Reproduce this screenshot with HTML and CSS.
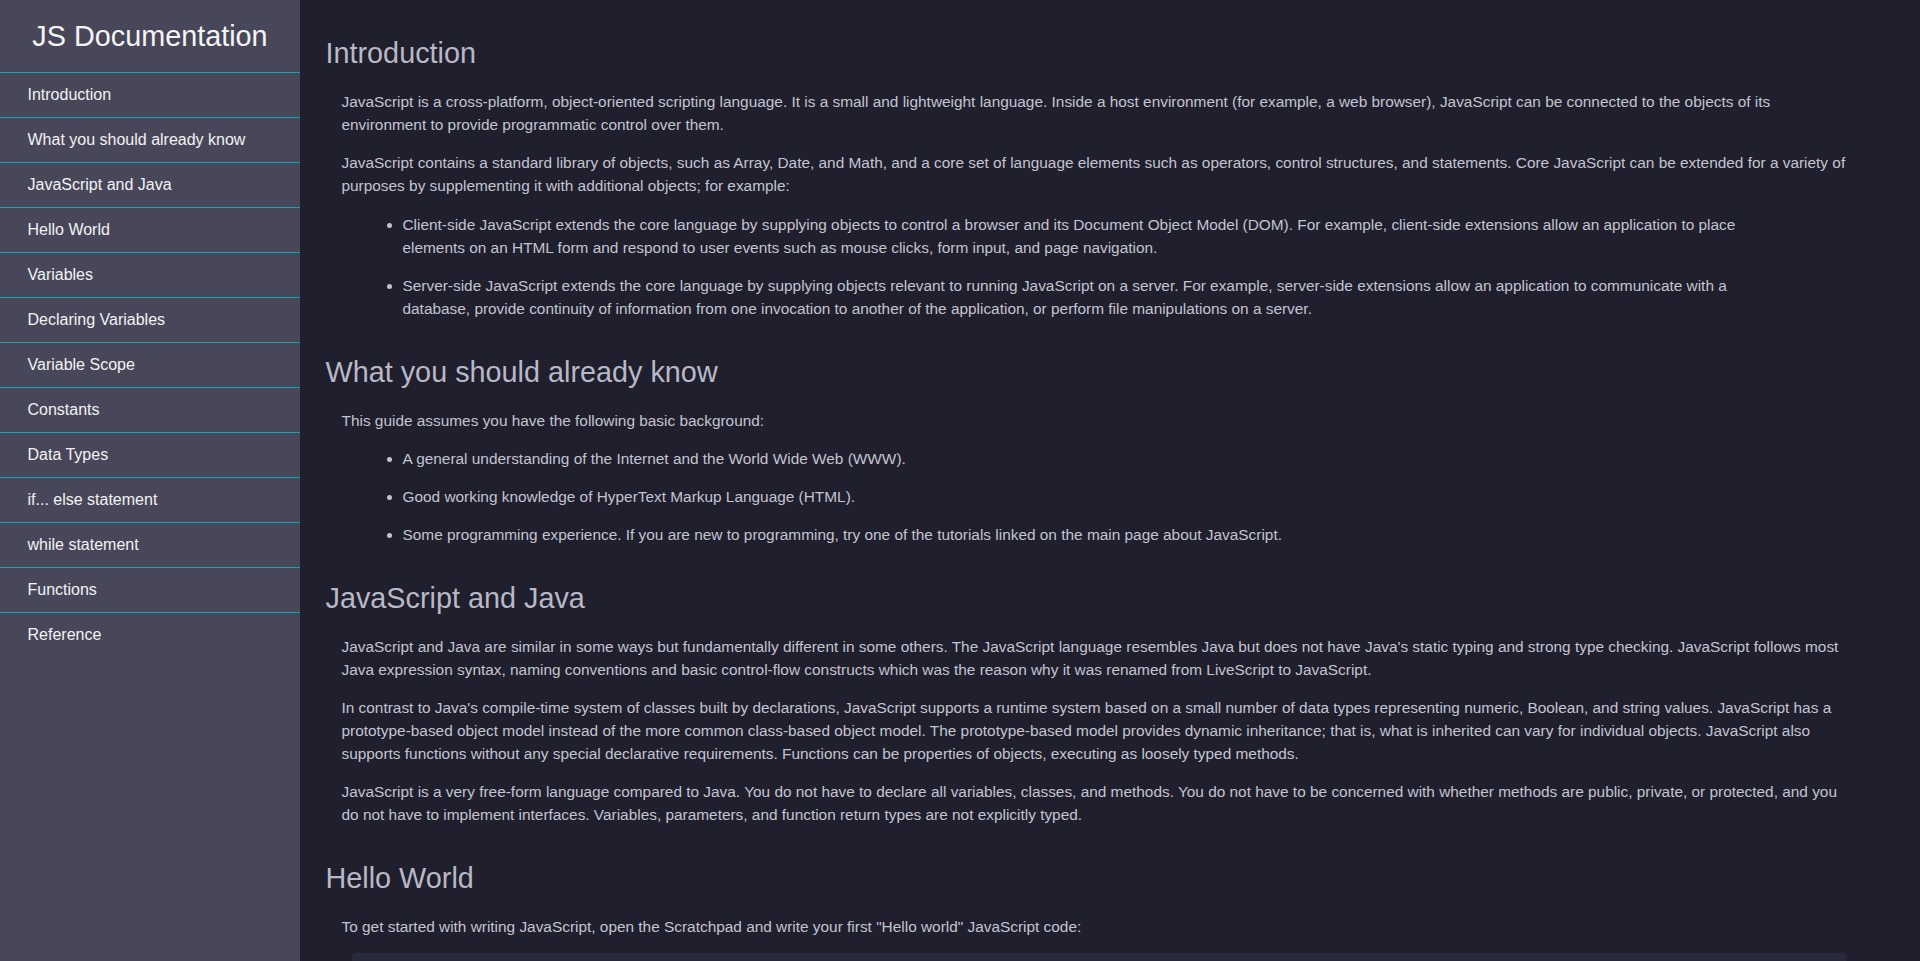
FILE: index.html
```html
<!DOCTYPE html>
<html lang="en">
<head>
<meta charset="utf-8">
<title>JS Documentation</title>
<link rel="stylesheet" href="styles.css">
</head>
<body>
<div class="layout">
  <nav class="navbar" id="navbar">
    <header class="nav-title">JS Documentation</header>
    <a class="nav-link" href="#Introduction">Introduction</a>
    <a class="nav-link" href="#What_you_should_already_know">What you should already know</a>
    <a class="nav-link" href="#JavaScript_and_Java">JavaScript and Java</a>
    <a class="nav-link" href="#Hello_World">Hello World</a>
    <a class="nav-link" href="#Variables">Variables</a>
    <a class="nav-link" href="#Declaring_Variables">Declaring Variables</a>
    <a class="nav-link" href="#Variable_Scope">Variable Scope</a>
    <a class="nav-link" href="#Constants">Constants</a>
    <a class="nav-link" href="#Data_Types">Data Types</a>
    <a class="nav-link" href="#if_else_statement">if... else statement</a>
    <a class="nav-link" href="#while_statement">while statement</a>
    <a class="nav-link" href="#Functions">Functions</a>
    <a class="nav-link" href="#Reference">Reference</a>
  </nav>
  <main class="main-doc" id="main-doc">
    <section class="main-section" id="Introduction">
      <header class="section-title">Introduction</header>
      <p>JavaScript is a cross-platform, object-oriented scripting language. It is a small and lightweight language. Inside a host environment (for example, a web browser), JavaScript can be connected to the objects of its environment to provide programmatic control over them.</p>
      <p>JavaScript contains a standard library of objects, such as Array, Date, and Math, and a core set of language elements such as operators, control structures, and statements. Core JavaScript can be extended for a variety of purposes by supplementing it with additional objects; for example:</p>
      <ul>
        <li>Client-side JavaScript extends the core language by supplying objects to control a browser and its Document Object Model (DOM). For example, client-side extensions allow an application to place elements on an HTML form and respond to user events such as mouse clicks, form input, and page navigation.</li>
        <li>Server-side JavaScript extends the core language by supplying objects relevant to running JavaScript on a server. For example, server-side extensions allow an application to communicate with a database, provide continuity of information from one invocation to another of the application, or perform file manipulations on a server.</li>
      </ul>
    </section>
    <section class="main-section" id="What_you_should_already_know">
      <header class="section-title">What you should already know</header>
      <p>This guide assumes you have the following basic background:</p>
      <ul>
        <li>A general understanding of the Internet and the World Wide Web (WWW).</li>
        <li>Good working knowledge of HyperText Markup Language (HTML).</li>
        <li>Some programming experience. If you are new to programming, try one of the tutorials linked on the main page about JavaScript.</li>
      </ul>
    </section>
    <section class="main-section" id="JavaScript_and_Java">
      <header class="section-title">JavaScript and Java</header>
      <p>JavaScript and Java are similar in some ways but fundamentally different in some others. The JavaScript language resembles Java but does not have Java's static typing and strong type checking. JavaScript follows most Java expression syntax, naming conventions and basic control-flow constructs which was the reason why it was renamed from LiveScript to JavaScript.</p>
      <p>In contrast to Java's compile-time system of classes built by declarations, JavaScript supports a runtime system based on a small number of data types representing numeric, Boolean, and string values. JavaScript has a prototype-based object model instead of the more common class-based object model. The prototype-based model provides dynamic inheritance; that is, what is inherited can vary for individual objects. JavaScript also supports functions without any special declarative requirements. Functions can be properties of objects, executing as loosely typed methods.</p>
      <p>JavaScript is a very free-form language compared to Java. You do not have to declare all variables, classes, and methods. You do not have to be concerned with whether methods are public, private, or protected, and you do not have to implement interfaces. Variables, parameters, and function return types are not explicitly typed.</p>
    </section>
    <section class="main-section" id="Hello_World">
      <header class="section-title">Hello World</header>
      <p>To get started with writing JavaScript, open the Scratchpad and write your first "Hello world" JavaScript code:</p>
      <pre class="code-block"><code>function greetMe(yourName) { alert("Hello " + yourName); }
greetMe("World");</code></pre>
    </section>
  </main>
</div>
</body>
</html>
```

FILE: styles.css
```css
html, body {
  margin: 0;
  padding: 0;
  height: 100%;
}

body {
  font-family: "Liberation Sans", Arial, sans-serif;
  background: #1f1f2e;
  color: #c4c4ce;
}

.layout {
  display: flex;
  height: 100vh;
  overflow: hidden;
}

.navbar {
  flex: 0 0 300px;
  width: 300px;
  background: #484759;
  display: flex;
  flex-direction: column;
}

.nav-title {
  font-size: 28.8px;
  line-height: 1.15;
  color: #f4f4f6;
  text-align: center;
  padding: 20px 0 19px;
}

.nav-link {
  display: block;
  border-top: 1px solid #12a4b4;
  padding: 10px 0 10px 27.5px;
  font-size: 16px;
  line-height: 24px;
  color: #f2f2f4;
  text-decoration: none;
}

.main-doc {
  flex: 1;
  min-width: 0;
  overflow: hidden;
  padding: 1px 70px 0 25.5px;
}

.section-title {
  font-size: 28.8px;
  line-height: 1.15;
  color: #b9b9c6;
  margin: 36px 0 20px;
}

.main-section p {
  font-size: 15.4px;
  line-height: 23px;
  margin: 15px 0 15px 16px;
}

.main-section ul {
  font-size: 15.4px;
  line-height: 23px;
  margin: 15.4px 90px 15.4px 0;
  padding-left: 77px;
}

.main-section li + li {
  margin-top: 15px;
}

.code-block {
  margin: 14px 4px 0 26px;
  padding: 16px 20px;
  background: #282a3c;
  border-radius: 4px;
  color: #d0d0da;
  font-family: "Liberation Mono", monospace;
  font-size: 14px;
  line-height: 20px;
}
```
